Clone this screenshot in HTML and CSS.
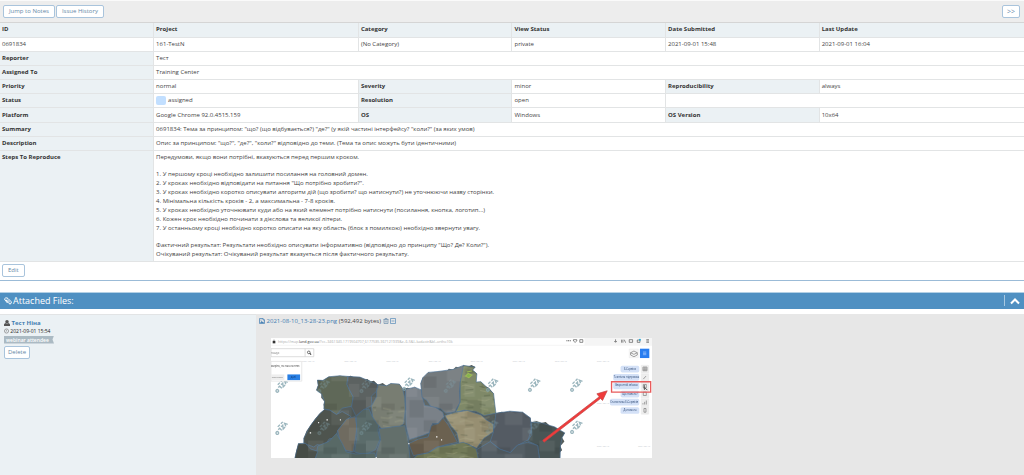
FILE: index.html
```html
<!DOCTYPE html>
<html lang="uk">
<head>
    <meta charset="UTF-8">
    <meta name="viewport" content="width=device-width, initial-scale=1.0">
    <title>0691834</title>
<link rel="stylesheet" href="styles.css">
</head>
<body>
    <div class="toolbar">
        <div class="btn-group">
            <button class="btn" type="button">Jump to Notes</button>
            <button class="btn" type="button">Issue History</button>
        </div>
        <button class="btn btn-next" type="button">&gt;&gt;</button>
    </div>
    <table class="issue">
        <colgroup>
            <col class="w15"><col class="w20"><col class="w15"><col class="w15"><col class="w15"><col class="w20">
        </colgroup>
        <tbody>
            <tr><th>ID</th><th>Project</th><th>Category</th><th>View Status</th><th>Date Submitted</th><th>Last Update</th></tr>
            <tr><td>0691834</td><td>161-TestN</td><td>(No Category)</td><td>private</td><td>2021-09-01 15:48</td><td>2021-09-01 16:04</td></tr>
            <tr><th>Reporter</th><td colspan="5">Тест</td></tr>
            <tr><th>Assigned To</th><td colspan="5">Training Center</td></tr>
            <tr><th>Priority</th><td>normal</td><th>Severity</th><td>minor</td><th>Reproducibility</th><td>always</td></tr>
            <tr><th>Status</th><td><span class="status-box"></span>assigned</td><th>Resolution</th><td>open</td><td colspan="2"></td></tr>
            <tr class="tall"><th>Platform</th><td>Google Chrome 92.0.4515.159</td><th>OS</th><td>Windows</td><th>OS Version</th><td>10x64</td></tr>
            <tr><th>Summary</th><td colspan="5">0691834: Тема за принципом: "що? (що відбувається?) "де?" (у якій частині інтерфейсу? "коли?" (за яких умов)</td></tr>
            <tr><th>Description</th><td colspan="5">Опис за принципом: "що?", "де?", "коли?" відповідно до теми. (Тема та опис можуть бути ідентичними)</td></tr>
            <tr class="steps">
                <th>Steps To Reproduce</th>
                <td colspan="5">
                    <p>Передумови, якщо вони потрібні, вказуються перед першим кроком.</p>
                    <p>1. У першому кроці необхідно залишити посилання на головний домен.<br>
                    2. У кроках необхідно відповідати на питання "Що потрібно зробити?".<br>
                    3. У кроках необхідно коротко описувати алгоритм дій (що зробити? що натиснути?) не уточнюючи назву сторінки.<br>
                    4. Мінімальна кількість кроків - 2, а максимальна - 7-8 кроків.<br>
                    5. У кроках необхідно уточнювати куди або на який елемент потрібно натиснути (посилання, кнопка, логотип...)<br>
                    6. Кожен крок необхідно починати з дієслова та великої літери.<br>
                    7. У останньому кроці необхідно коротко описати на яку область (блок з помилкою) необхідно звернути увагу.</p>
                    <p>Фактичний результат: Результати необхідно описувати інформативно (відповідно до принципу "Що? Де? Коли?").<br>
                    Очікуваний результат: Очікуваний результат вказується після фактичного результату.</p>
                </td>
            </tr>
        </tbody>
    </table>
    <div class="actions">
        <button class="btn" type="button">Edit</button>
    </div>

    <div class="widget-header">
        <h4>
            <svg class="clip" viewBox="0 0 16 16"><path d="M4 6l6 7q2 2 4 0t0-4L8 3Q6 1 3 2T2 6l5 6M6 5l6 6" fill="none" stroke="#fff" stroke-width="2"/></svg>
            Attached Files:
        </h4>
        <button class="collapse" type="button" aria-label="Collapse">
            <svg viewBox="0 0 10 8"><path d="M1 6.500 5 2.500l4 4" fill="none" stroke="#fff" stroke-width="2"/></svg>
        </button>
    </div>

    <div class="note">
        <div class="note-user">
            <div>
                <svg class="ico" viewBox="0 0 12 12"><circle cx="6" cy="3.500" r="3.500" fill="#555"/><path d="M0 12V9q0-2 3-3 3 2 6 0 3 1 3 3v3z" fill="#555"/></svg>
                <a class="user" href="#">Тест Ніна</a>
            </div>
            <div class="date">
                <svg class="ico" viewBox="0 0 12 12"><circle cx="6" cy="6" r="5" fill="none" stroke="#666" stroke-width="1.300"/><path d="M6 3v3.500H4" fill="none" stroke="#666"/></svg>
                2021-09-01 15:54
            </div>
            <div class="badge">webinar attendee</div>
            <button class="btn" type="button">Delete</button>
        </div>
        <div class="note-body">
            <div class="file">
                <svg class="ico" viewBox="0 0 12 12"><path d="M1 1h7l3 3v7H1zM8 1v3h3" fill="none" stroke="#4a83b5" stroke-width="1.500"/><path d="M2 10l3-4 2 2 1-1 2 3z" fill="#4a83b5"/><circle cx="4" cy="4" r="1" fill="#4a83b5"/></svg>
                <a href="#">2021-08-10_13-28-23.png</a> (592,492 bytes)
                <svg class="ico trash" viewBox="0 0 12 12"><path d="M1 3h10M4 3V1h4v2M2 3v8h8V3M4.500 5v4M7.500 5v4" fill="none" stroke="#6689a8" stroke-width="1.300"/></svg><svg class="ico" viewBox="0 0 12 12"><path d="M1 1h10v10H1zM3 6h6" fill="none" stroke="#4a83b5" stroke-width="1.300"/></svg>
            </div>
            <svg class="shot" viewBox="62 86 1140 361">
                <defs>
                    <g id="mark" transform="rotate(-45)" fill="none" stroke="#83a4ae" stroke-width="4" opacity=".8">
                        <circle cx="-18" cy="5" r="4"/><path d="M-9 0h6v9M3 0h7l-7 9h8M14 9l4-9 4 9M-4-7h9M9-7h8"/>
                    </g>
                    <pattern id="tiles" width="173" height="131" patternUnits="userSpaceOnUse">
                        <path d="M0 0h46v31H0zM70 40h52v44H70zM122 92h31v39h-31z" fill="#fff" opacity=".06"/><path d="M46 20h40v20H46zM0 70h38v34H0zM130 10h43v52h-43z" fill="#000" opacity=".08"/>
                    </pattern>
                    <pattern id="fields" width="97" height="53" patternUnits="userSpaceOnUse">
                        <path d="M2 6l22 3 13-5M44 19l17-4 26 6M9 31l24 5M55 42l30-5" fill="none" stroke="#b6b893" stroke-width="3" opacity=".3"/><path d="M48 5l20 2M7 19l18 3M62 30l24-2M20 47l19-2" fill="none" stroke="#37452f" stroke-width="4" opacity=".25"/>
                    </pattern>
                    <path id="land" d="M133 447L137 425 144 402 156 406 165 399 160 386 168 364 180 348 194 328 208 312 222 300 219 285 222 276 212 265 213 253 198 242 203 228 201 212 217 213 235 202 252 204 268 199 285 203 300 199 314 205 328 203 335 212 350 209 360 216 370 214 382 226 396 221 408 229 421 222 433 229 446 224 456 238 471 235 485 239 492 233 505 242 513 240 510 222 516 205 526 202 532 189 549 193 563 186 586 188 594 178 607 180 615 172 630 175 638 168 652 171 662 167 673 173 665 182 678 193 672 205 676 218 690 217 701 230 714 235 728 252 724 270 731 280 727 296 735 311 753 307 765 311 777 305 792 312 815 308 825 322 838 325 841 338 857 334 871 340 884 337 897 349 911 352 920 360 941 370 933 384 940 396 928 409 933 422 923 431 927 447z"/>
                </defs>
                <path d="M62 86h1140v361H62z" fill="#fff"/>
                <!-- browser bar -->
                <path d="M62 86h1140v23H62z" fill="#f5f5f5"/><path d="M62 87h938v19H62z" fill="#fff"/>
                <path d="M67 95h8v7h-8z" fill="#333"/><path d="M69 95v-3h4v3" fill="none" stroke="#333"/>
                <text x="83" y="101" font-size="11" fill="#aaa">https://map.<tspan fill="#333">land.gov.ua</tspan>/?cc=3461340.1719504707,6177585.367121939&amp;z=6.5&amp;l=kadastr&amp;bl=ortho10k</text>
                <path d="M946 94h3M951 94h3M956 94h3" stroke="#555" stroke-width="3"/>
                <path d="M967 91h10v4q-5 8-10 0zM986 91h9v8h-9zM1093 90v8M1089 95l4 4 4-4M1111 91v9M1115 91v9M1119 91l4 9M1134 91h10v8h-10zM1158 92h8v7h-8zM1185 91h8M1185 95h8M1185 99h8" fill="none" stroke="#555" stroke-width="2"/>
                <circle cx="1166" cy="91" r="3" fill="#24a8d8"/>
                <g fill="#c5cacf" font-size="7"><text x="155" y="159">2021-08-10</text><text x="281" y="159">2021-08-10</text><text x="407" y="159">2021-08-10</text><text x="533" y="159">2021-08-10</text><text x="659" y="159">2021-08-10</text><text x="785" y="159">2021-08-10</text><text x="911" y="159">2021-08-10</text><text x="1037" y="159">2021-08-10</text><text x="1037" y="285">2021-08-10</text><text x="1037" y="411">2021-08-10</text><text x="1160" y="411">2021-08-10</text></g>
                <!-- regions -->
                <use href="#land" fill="#565e5c"/>
                <g stroke="#4f7496" stroke-width="2" stroke-linejoin="round">
                    <path d="M213 253L198 242 203 228 201 212 217 213 235 202 268 199 292 201 290 225 296 240 308 262 304 290 275 296 258 315 238 302 220 298 222 276z" fill="#5f6858"/>
                    <path d="M292 201L328 203 360 216 382 226 378 245 362 260 364 288 340 300 316 319 303 292 308 262 296 240 289 225z" fill="#5c6261"/>
                    <path d="M160 401L160 386 180 348 208 312 222 300 238 302 258 315 275 306 300 320 278 344 262 362 256 384 236 388 222 409 200 405 190 412z" fill="#4e544e"/>
                    <path d="M262 362L288 329 314 321 319 353 314 390 308 427 285 422 268 396z" fill="#6f6b60"/>
                    <path d="M317 321L337 301 355 298 365 321 385 340 382 363 388 389 375 420 344 436 312 427 319 381z" fill="#5b6c6b"/>
                    <path d="M382 226L408 229 421 222 446 224 456 238 462 265 464 300 459 342 444 355 396 360 378 341 366 322 362 290 378 262 378 245z" fill="#787d72"/>
                    <path d="M385 358L425 352 462 348 472 388 478 447H375L380 420 390 390z" fill="#636f6b"/>
                    <path d="M464 240L492 233 513 242 516 265 522 288 552 292 576 308 580 322 562 342 545 342 540 368 515 378 476 390 466 350z" fill="#7a8188"/>
                    <path d="M514 264L510 222 516 205 532 189 563 186 607 180 638 168 639 190 630 208 626 246 628 278 611 307 585 311 570 298 540 290 528 272z" fill="#747a7d"/>
                    <path d="M638 168L673 173 665 182 678 193 676 218 690 217 728 252 731 280 735 311 700 318 675 306 640 302 615 308 628 278 628 220z" fill="#7f8968"/>
                    <path d="M582 318L615 308 650 303 690 316 705 330 727 343 728 366 700 385 677 416 652 404 625 402 618 370 600 348z" fill="#978f72"/>
                    <path d="M474 402L504 388 532 382 542 348 563 342 576 325 592 345 606 370 620 398 587 405 557 413 530 430 488 438z" fill="#6b6150"/>
                    <path d="M488 447L500 436 532 430 560 413 605 405 637 398 652 404 676 418 690 447z" fill="#727a58"/>
                    <path d="M735 311L777 305 815 308 838 325 841 360 832 390 796 410 778 429 750 420 718 396 728 366z" fill="#545b63"/>
                    <path d="M841 338L871 340 911 352 941 370 933 384 928 409 927 447H865L860 408 830 394 842 375z" fill="#495555"/>
                    <path d="M677 420L718 396 745 418 778 429 800 406 830 398 860 408 865 447H682z" fill="#545e64"/>
                    <path d="M194 447L202 409 236 395 258 372 275 401 287 427 315 433 372 430 378 447z" fill="#586966"/>
                    <path d="M133 447L144 402 165 401 180 418 202 425 194 447z" fill="#4c524c"/>
                </g>
                <use href="#land" fill="url(#tiles)"/>
                <path d="M638 168L673 173 676 218 728 252 735 311 727 366 677 416 690 447H490L560 413 625 402 582 318 628 278zM366 290L460 288 462 348 390 356z" fill="url(#fields)"/>
                <path d="M644 200l8-8 11 5-9 8zM648 188l15-3" fill="#84b34e" stroke="#9db957" stroke-width="3"/>
                <path d="M228 331h4M203 339h3M178 370h4M268 331h3M556 382h4M571 391h3M473 402h3M375 445h4" stroke="#fff" stroke-width="4"/>
                <use href="#mark" transform="translate(90 228)"/><use href="#mark" transform="translate(90 354)"/><use href="#mark" transform="translate(470 222)"/><use href="#mark" transform="translate(720 225)"/><use href="#mark" transform="translate(846 225)"/><use href="#mark" transform="translate(972 225)"/><use href="#mark" transform="translate(972 351)"/>
                <g opacity=".5"><use href="#mark" transform="translate(216 228)"/><use href="#mark" transform="translate(342 228)"/><use href="#mark" transform="translate(216 354)"/><use href="#mark" transform="translate(342 354)"/><use href="#mark" transform="translate(594 228)"/><use href="#mark" transform="translate(720 350)"/><use href="#mark" transform="translate(846 350)"/></g>
                <!-- search panel -->
                <path d="M62 118h128v24H62zM164 118v24" fill="#fff" stroke="#ccc" stroke-width="2"/><circle cx="175" cy="129" r="4" fill="none" stroke="#333" stroke-width="2"/><path d="M178 132l4 4" stroke="#333" stroke-width="3"/><text x="62" y="133" font-size="8" fill="#777">пошук</text>
                <path d="M62 156h92v59H62z" fill="#fff" stroke="#ddd" stroke-width="2"/>
                <text x="62" y="174" font-size="8" fill="#333">миріть, по населенню</text>
                <path d="M62 195h40v17H62z" fill="#eee"/><path d="M111 195h38v17h-38z" fill="#287fe4"/>
                <text x="64" y="206" font-size="7" fill="#777">скасувати</text><text x="121" y="206" font-size="8" fill="#143c76">далі</text>
                <!-- right menu -->
                <path d="M1134 119h27v26h-27z" fill="#f7f7f7" stroke="#ddd"/><path d="M1138 130l10-5 10 5-10 5zM1138 130v7l10 5 10-5v-7" fill="none" stroke="#777" stroke-width="2"/>
                <path d="M1166 118h28v28h-28z" fill="#287df0"/><path d="M1175 128h10M1175 132h10M1175 136h10" stroke="#a8caff" stroke-width="2"/>
                <g fill="#d4e1f7"><rect x="1108" y="169" width="56" height="20" rx="5"/><rect x="1086" y="194" width="78" height="20" rx="5"/><rect x="1086" y="219" width="78" height="20" rx="5"/><rect x="1108" y="244" width="56" height="20" rx="5"/><rect x="1076" y="268" width="88" height="20" rx="5"/><rect x="1108" y="293" width="56" height="20" rx="5"/></g>
                <g fill="#26436e" font-size="8"><text x="1118" y="181">Е-Сервіси</text><text x="1088" y="206">Технічна підтримка</text><text x="1091" y="231">Зворотній зв'язок</text><text x="1113" y="256">Що нового?</text><text x="1077" y="281">Статистика Е-Сервісів</text><text x="1117" y="305">Допомога</text></g>
                <g fill="#eee" stroke="#ddd"><path d="M1170 168h22v22h-22zM1170 193h22v22h-22zM1170 218h22v22h-22zM1170 243h22v22h-22zM1170 268h22v22h-22zM1170 292h22v22h-22z"/></g>
                <path d="M1175 173h12v11h-12zM1175 179h12M1181 173v11M1176 209l8-9M1176 225h9v10h-9zM1176 248h9v10h-9zM1175 285v-4M1180 285v-8M1185 285v-12M1178 297h6v11h-6z" fill="none" stroke="#777" stroke-width="2"/>
                <path d="M1081 217h117v31h-117z" fill="none" stroke="#e85b5b" stroke-width="4"/>
                <path d="M875 392L1044 262l-7-9 31-9-14 29-6-6-169 131z" fill="#f03b3b" stroke="#c04545" stroke-width="2"/>
                <path d="M1179 227v13l4-3 5 5" fill="none" stroke="#111" stroke-width="2"/>
            </svg>
        </div>
    </div>
</body>
</html>
```
FILE: styles.css
```css
*{
    box-sizing: border-box;
}
body{
    margin: 0;
    min-height: 100vh;
    display: flex;
    flex-direction: column;
    background: #fff;
    color: #444;
    font-family: "Open Sans", sans-serif;
    font-size: 6px;
    line-height: 9px;
}
a{
    color: #3f7cb0;
    text-decoration: none;
}
.toolbar{
    display: flex;
    justify-content: space-between;
    align-items: center;
    height: 23px;
    padding: 0 4px 0 3px;
    background: #ededed;
    border-top: 1px solid #fafafa;
    border-bottom: 1px solid #d5d5d5;
}
.btn-group{
    display: flex;
    gap: 1px;
}
.btn{
    height: 13px;
    padding: 0 5px;
    background: #fff;
    border: 1px solid #a9c4dc;
    border-radius: 2px;
    color: #6688a6;
    font-family: inherit;
    font-size: 6px;
    line-height: 9px;
}
.btn-next{
    padding: 0 4px;
    font-size: 7px;
}
.issue{
    width: 100%;
    table-layout: fixed;
    border-collapse: collapse;
}
.w15{
    width: 15%;
}
.w20{
    width: 20%;
}
.issue th,
.issue td{
    height: 14px;
    padding: 2px;
    border: 1px solid #e2e4e5;
    border-top: 0;
    text-align: left;
    vertical-align: top;
}
.issue th:first-child,
.issue td:first-child{
    border-left: 0;
}
.issue th:last-child,
.issue td:last-child{
    border-right: 0;
}
.issue th{
    background: #ebf1f4;
    color: #333;
    font-weight: 700;
}
.issue .tall th,
.issue .tall td{
    height: 15px;
    padding-top: 3px;
}
.issue p{
    margin: 0 0 8px;
}
.issue p:last-child{
    margin: 0;
}
.status-box{
    display: inline-block;
    width: 10px;
    height: 9px;
    margin-right: 2px;
    border-radius: 2px;
    background: #c2dfff;
    vertical-align: top;
}
.actions{
    display: flex;
    align-items: center;
    height: 19px;
    padding-left: 2px;
    border-bottom: 1px solid #9bbbd7;
}
.widget-header{
    display: flex;
    justify-content: space-between;
    align-items: center;
    height: 17px;
    margin: 11px 0 5px;
    padding: 0 4px;
    background: #4f90c2;
    border-top: 1px solid #b3d0e5;
    color: #fff;
}
.widget-header h4{
    display: flex;
    align-items: center;
    gap: 1px;
    margin: 0;
    font-size: 9px;
    font-weight: 400;
    line-height: 12px;
}
.clip{
    width: 8px;
    height: 8px;
}
.collapse{
    display: flex;
    align-items: center;
    height: 11px;
    padding: 0 0 0 5px;
    background: none;
    border: 0;
    border-left: 1px solid #a7c8e1;
}
.collapse svg{
    width: 10px;
    height: 8px;
}
.note{
    display: flex;
    flex: 1;
}
.note-user{
    width: 25%;
    padding: 4px;
    background: #ebf1f4;
    border-top: 1px solid #e2e4e5;
}
.note-user .user{
    font-weight: 700;
}
.note-user > div{
    height: 8px;
}
.ico{
    width: 6px;
    height: 6px;
    vertical-align: middle;
}
.date .ico{
    width: 5px;
}
.date{
    font-size: 5px;
    color: #222;
}
.note-user .badge{
    width: 50px;
    margin: 1px 0 2px;
    padding: 0 2px;
    background: #abbac3;
    color: #fff;
    font-size: 5px;
    font-weight: 600;
    line-height: 8px;
    white-space: nowrap;
    clip-path: polygon(0 0, 100% 0, 97% 50%, 100% 100%, 0 100%);
}
.note-user .btn{
    padding: 0 3px;
}
.note-body{
    flex: 1;
    padding: 3px;
    background: #e7e7e7;
}
.trash{
    margin-right: 1px;
}
.shot{
    display: block;
    width: 50%;
    margin: 12px 0 0 12px;
}
```
